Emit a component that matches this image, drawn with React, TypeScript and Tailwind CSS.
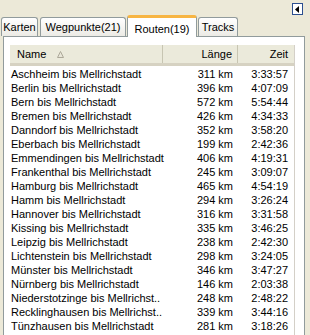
import React from "react";

const rows: [string, string, string][] = [
  ["Aschheim bis Mellrichstadt", "311 km", "3:33:57"],
  ["Berlin bis Mellrichstadt", "396 km", "4:07:09"],
  ["Bern bis Mellrichstadt", "572 km", "5:54:44"],
  ["Bremen bis Mellrichstadt", "426 km", "4:34:33"],
  ["Danndorf bis Mellrichstadt", "352 km", "3:58:20"],
  ["Eberbach bis Mellrichstadt", "199 km", "2:42:36"],
  ["Emmendingen bis Mellrichstadt", "406 km", "4:19:31"],
  ["Frankenthal bis Mellrichstadt", "245 km", "3:09:07"],
  ["Hamburg bis Mellrichstadt", "465 km", "4:54:19"],
  ["Hamm bis Mellrichstadt", "294 km", "3:26:24"],
  ["Hannover bis Mellrichstadt", "316 km", "3:31:58"],
  ["Kissing bis Mellrichstadt", "335 km", "3:46:25"],
  ["Leipzig bis Mellrichstadt", "238 km", "2:42:30"],
  ["Lichtenstein bis Mellrichstadt", "298 km", "3:24:05"],
  ["Münster bis Mellrichstadt", "346 km", "3:47:27"],
  ["Nürnberg bis Mellrichstadt", "146 km", "2:03:38"],
  ["Niederstotzinge bis Mellrichst..", "248 km", "2:48:22"],
  ["Recklinghausen bis Mellrichst..", "339 km", "3:44:16"],
  ["Tünzhausen bis Mellrichstadt", "281 km", "3:18:26"],
];

function Tab({ label, active, className }: { label: string; active?: boolean; className?: string }) {
  if (active) {
    return (
      <div
        className={
          "relative z-10 h-[22px] -mb-[1px] flex items-start justify-center pt-[3px] bg-white border-x border-[#919b9c] rounded-t-[3px] border-t-[3px] border-t-[#f7b543] " +
          (className ?? "")
        }
      >
        {label}
      </div>
    );
  }
  return (
    <div
      className={
        "h-[19px] flex items-center justify-center bg-gradient-to-b from-white to-[#ecebe5] border border-b-0 border-[#919b9c] rounded-t-[3px] " +
        (className ?? "")
      }
    >
      {label}
    </div>
  );
}

export default function App() {
  return (
    <div
      className="relative w-[310px] h-[335px] overflow-hidden bg-[#ece9d8] text-[11px] text-black"
      style={{ fontFamily: '"Liberation Sans", Arial, sans-serif' }}
    >
      {/* top-right collapse button */}
      <div className="absolute left-[292px] top-[3px] w-[11px] h-[12px] border border-[#2c4f8f] bg-white flex items-center justify-center">
        <svg width="5" height="7" viewBox="0 0 5 7">
          <polygon points="4,0 4,7 0,3.5" fill="#000" />
        </svg>
      </div>

      {/* tabs */}
      <div className="pt-[15px] pl-[1px] flex items-end gap-[2px]">
        <Tab label="Karten" className="w-[37px]" />
        <Tab label="Wegpunkte(21)" className="w-[86px]" />
        <Tab label="Routen(19)" active className="w-[70px] -ml-[1px]" />
        <Tab label="Tracks" className="w-[40px] -ml-[1px]" />
      </div>

      {/* panel */}
      <div className="ml-[3px] w-[302px] h-[300px] border border-b-0 border-[#919b9c] bg-white pt-[8px]">
        <div className="ml-[6px] w-[285px] h-full border-r border-[#d4d0c8] bg-white">
          {/* header */}
          <div className="grid grid-cols-[153px_75px_56px] h-[21px] bg-[#ebeadb] border-b-[3px] border-[#d6d2c2]">
            <div className="relative flex items-center pl-[7px] border-r border-[#c7c5b2]">
              Name
              <svg className="absolute left-[47px] top-[6px]" width="7" height="7" viewBox="0 0 7 7">
                <polygon points="3.5,0.5 6.5,6.5 0.5,6.5" fill="#e8e6d8" stroke="#aca899" />
              </svg>
            </div>
            <div className="flex items-center justify-end pr-[5px] border-r border-[#c7c5b2]">Länge</div>
            <div className="flex items-center justify-end pr-[6px]">Zeit</div>
          </div>
          {/* rows */}
          <div className="pt-[1px]">
            {rows.map(([n, l, z]) => (
              <div key={n} className="grid grid-cols-[153px_75px_56px] h-[14px] leading-[14px]">
                <div className="pl-[1px] whitespace-nowrap">{n}</div>
                <div className="text-right pr-[5px]">{l}</div>
                <div className="text-right pr-[6px]">{z}</div>
              </div>
            ))}
          </div>
        </div>
      </div>
    </div>
  );
}
